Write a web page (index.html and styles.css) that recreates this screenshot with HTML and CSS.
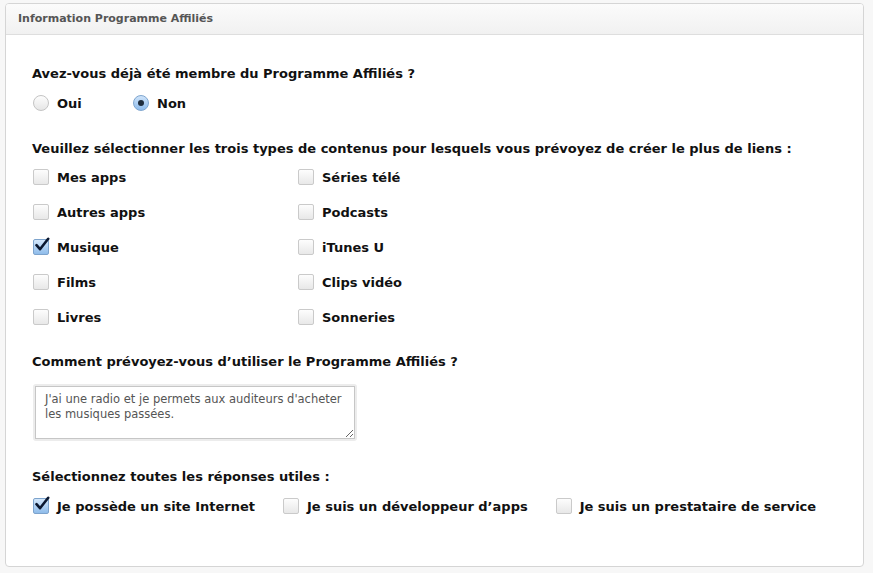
FILE: index.html
```html
<!DOCTYPE html>
<html lang="fr">
<head>
    <meta charset="UTF-8">
    <title>Information Programme Affiliés</title>
    <link rel="stylesheet" href="styles.css">
</head>
<body>
    <div class="panel">
        <div class="panel-header">Information Programme Affiliés</div>

        <div class="panel-body">
            <!-- Membre -->
            <p class="question">Avez-vous déjà été membre du Programme Affiliés ?</p>
            <div class="radio-row">
                <label class="option"><span class="radio"></span>Oui</label>
                <label class="option"><span class="radio checked"></span>Non</label>
            </div>

            <!-- Types de contenus -->
            <p class="question q-types">Veuillez sélectionner les trois types de contenus pour lesquels vous prévoyez de créer le plus de liens :</p>
            <div class="check-grid">
                <label class="option"><span class="box"></span>Mes apps</label>
                <label class="option"><span class="box"></span>Séries télé</label>
                <label class="option"><span class="box"></span>Autres apps</label>
                <label class="option"><span class="box"></span>Podcasts</label>
                <label class="option"><span class="box checked"><svg viewBox="0 0 16 16" width="16" height="16"><path d="M2.5 8.2 L6 12.2 L14.2 1.8" fill="none" stroke="#0b1830" stroke-width="2.6" stroke-linecap="round" stroke-linejoin="round"/></svg></span>Musique</label>
                <label class="option"><span class="box"></span>iTunes U</label>
                <label class="option"><span class="box"></span>Films</label>
                <label class="option"><span class="box"></span>Clips vidéo</label>
                <label class="option"><span class="box"></span>Livres</label>
                <label class="option"><span class="box"></span>Sonneries</label>
            </div>

            <!-- Utilisation -->
            <p class="question q-usage">Comment prévoyez-vous d’utiliser le Programme Affiliés ?</p>
            <div class="textarea-wrap">
                <textarea class="usage">J'ai une radio et je permets aux auditeurs d'acheter les musiques passées.</textarea>
            </div>

            <!-- Réponses utiles -->
            <p class="question q-useful">Sélectionnez toutes les réponses utiles :</p>
            <div class="useful-row">
                <label class="option"><span class="box checked"><svg viewBox="0 0 16 16" width="16" height="16"><path d="M2.5 8.2 L6 12.2 L14.2 1.8" fill="none" stroke="#0b1830" stroke-width="2.6" stroke-linecap="round" stroke-linejoin="round"/></svg></span>Je possède un site Internet</label>
                <label class="option"><span class="box"></span>Je suis un développeur d’apps</label>
                <label class="option"><span class="box"></span>Je suis un prestataire de service</label>
            </div>
        </div>
    </div>
</body>
</html>
```

FILE: styles.css
```css
body {
    margin: 0;
    padding: 3px 9px 6px 5px;
    background-color: #f7f7f7;
    font-family: "DejaVu Sans", "Liberation Sans", sans-serif;
    color: #111;
}
.panel {
    height: 562px;
    background-color: white;
    border: 1px solid #d5d5d5;
    border-radius: 4px;
    overflow: hidden;
}
.panel-header {
    height: 30px;
    line-height: 30px;
    padding-left: 12px;
    font-size: 11px;
    font-weight: bold;
    color: #555;
    background: linear-gradient(#fbfbfb, #f1f1f1);
    border-bottom: 1px solid #dedede;
}
.panel-body {
    padding: 31px 0 0 26px;
}
.question {
    margin: 0;
    font-size: 13px;
    line-height: 16px;
    font-weight: bold;
}
.option {
    display: flex;
    align-items: center;
    height: 20px;
    font-size: 13px;
    font-weight: bold;
}
.radio-row {
    display: flex;
    margin-top: 11px;
}
.radio-row .option {
    width: 100px;
}
.radio {
    width: 14px;
    height: 14px;
    margin: 0 8px 0 1px;
    border: 1px solid #c4c4c4;
    border-radius: 50%;
    background: linear-gradient(#fdfdfd, #e6e6e6);
    display: flex;
    align-items: center;
    justify-content: center;
}
.radio.checked {
    border-color: #7fa6cf;
    background: linear-gradient(#cfe4fa, #8dbbec);
}
.radio.checked::after {
    content: "";
    width: 6px;
    height: 6px;
    border-radius: 50%;
    background-color: #1e2c3c;
}
.box {
    position: relative;
    width: 14px;
    height: 14px;
    margin: 0 8px 0 1px;
    border: 1px solid #cacaca;
    border-radius: 2px;
    background: linear-gradient(#fdfdfd, #e8e8e8);
}
.box.checked {
    border-color: #7da3cc;
    background: linear-gradient(#d3e7fb, #8fbcea);
}
.box svg {
    position: absolute;
    left: 0;
    top: -3px;
}
.q-types {
    margin-top: 28px;
}
.check-grid {
    display: grid;
    grid-template-columns: 265px 265px;
    row-gap: 15px;
    margin-top: 10px;
}
.q-usage {
    margin-top: 27px;
}
.textarea-wrap {
    display: inline-block;
    margin-top: 14px;
    padding: 2px;
    margin-left: 1px;
    background-color: #ececec;
    border-radius: 3px;
}
.usage {
    display: block;
    width: 320px;
    height: 53px;
    box-sizing: border-box;
    margin: 0;
    padding: 5px 9px;
    border: 1px solid #c6c6c6;
    font-family: "DejaVu Sans", sans-serif;
    font-size: 11.5px;
    line-height: 15px;
    color: #555;
    resize: both;
}
.q-useful {
    margin-top: 26px;
}
.useful-row {
    display: flex;
    gap: 27px;
    margin-top: 11px;
}
```
